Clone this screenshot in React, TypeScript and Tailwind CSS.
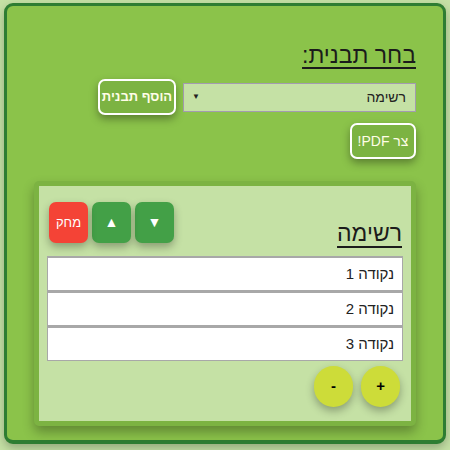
import React from 'react';

const items = ['נקודה 1', 'נקודה 2', 'נקודה 3'];

export default function App() {
  return (
    <div
      dir="rtl"
      className="w-[450px] h-[450px] bg-[#c5e1a5] pt-[3px] px-[4px]"
      style={{ fontFamily: '"Liberation Sans", Arial, sans-serif' }}
    >
      <div className="h-[441px] rounded-[9px] border-[3px] border-b-4 border-[#2e7d32] bg-[#8bc34a] px-[27px] pt-[35px] shadow-[0_4px_10px_rgba(0,0,0,0.25)]">
        <h1 className="text-[23px] leading-[28px] text-[#1b1b1b] underline underline-offset-[4px] decoration-[1.5px]">
          בחר תבנית:
        </h1>

        <div className="mt-[10px] flex items-center gap-[7px]">
          <div className="flex h-[29px] w-[233px] items-center justify-between border border-[#a39bb0] bg-[#c5e1a5] pr-[9px] pl-[8px] text-[14px] text-[#222]">
            <span>רשימה</span>
            <span className="text-[8px]">▼</span>
          </div>
          <button className="h-[36px] w-[78px] rounded-[7px] border-2 border-white bg-[#7cb342] text-[13px] font-bold text-[#fffde7] shadow-[0_4px_8px_rgba(0,0,0,0.35)]">
            הוסף תבנית
          </button>
        </div>

        <div className="mt-[8px] flex">
          <button className="h-[36px] w-[66px] rounded-[7px] border-2 border-white bg-[#7cb342] text-[14px] text-[#fffde7] shadow-[0_4px_8px_rgba(0,0,0,0.35)]">
            צר PDF!
          </button>
        </div>

        <div className="mt-[22px] h-[245px] rounded-[5px] border-[5px] border-[#7cb342] bg-[#c5e1a5] px-[8px] pt-[16px] shadow-[0_6px_12px_rgba(0,0,0,0.3)]">
          <div className="flex items-end justify-between">
            <h2 className="-mb-[4px] pr-[1px] text-[23px] leading-[28px] text-[#1b1b1b] underline underline-offset-[5px] decoration-[1.5px]">
              רשימה
            </h2>
            <div className="flex gap-[4px] pl-[2px]">
              <button className="flex h-[41px] w-[39px] items-center justify-center rounded-[7px] bg-[#43a047] text-[14px] text-white shadow-[0_4px_8px_rgba(0,0,0,0.3)]">
                ▼
              </button>
              <button className="flex h-[41px] w-[39px] items-center justify-center rounded-[7px] bg-[#43a047] text-[14px] text-white shadow-[0_4px_8px_rgba(0,0,0,0.3)]">
                ▲
              </button>
              <button className="flex h-[41px] w-[39px] items-center justify-center rounded-[7px] bg-[#f44336] text-[13px] text-white shadow-[0_4px_8px_rgba(0,0,0,0.3)]">
                מחק
              </button>
            </div>
          </div>

          <div className="mt-[13px]">
            {items.map((item) => (
              <div
                key={item}
                className="flex h-[35px] items-center border border-t-2 border-[#a8a8a8] bg-white pr-[8px] text-[15px] text-[#222]"
              >
                {item}
              </div>
            ))}
          </div>

          <div className="mt-[5px] flex gap-[8px] pr-[3px]">
            <button className="flex h-[41px] w-[39px] items-center justify-center rounded-full bg-[#cddc39] text-[15px] font-bold text-black shadow-[0_4px_8px_rgba(0,0,0,0.3)]">
              +
            </button>
            <button className="flex h-[41px] w-[39px] items-center justify-center rounded-full bg-[#cddc39] text-[15px] font-bold text-black shadow-[0_4px_8px_rgba(0,0,0,0.3)]">
              -
            </button>
          </div>
        </div>
      </div>
    </div>
  );
}
